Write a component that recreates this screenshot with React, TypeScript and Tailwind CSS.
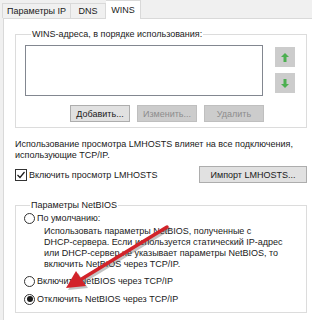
import { ReactNode } from "react"

function Btn({ children, disabled, className = "" }: { children: ReactNode; disabled?: boolean; className?: string }) {
  return (
    <div
      className={
        "h-[17px] flex items-center justify-center border " +
        (disabled ? "bg-[#cccccc] border-[#bfbfbf] text-[#8d8d8d] " : "bg-[#e1e1e1] border-[#adadad] text-[#1a1a1a] ") +
        className
      }
    >
      {children}
    </div>
  )
}

function Radio({ checked, label }: { checked?: boolean; label: string }) {
  return (
    <div className="flex items-center gap-[2px] h-[14px]">
      <div className="w-[11px] h-[11px] rounded-full border border-[#333] flex items-center justify-center bg-white">
        {checked && <div className="w-[6px] h-[6px] rounded-full bg-[#1a1a1a]" />}
      </div>
      <span>{label}</span>
    </div>
  )
}

export default function App() {
  return (
    <div className="relative w-[312px] h-[320px] overflow-hidden whitespace-nowrap bg-[#f0f0f0] text-[9px] leading-[12px] text-[#1a1a1a] font-['Liberation_Sans',Arial,sans-serif]">
      {/* tabs */}
      <div className="flex items-end h-[18px] pl-[2px]">
        <div className="w-[69px] h-[15px] border border-b-0 border-[#d9d9d9] flex items-center justify-center">Параметры IP</div>
        <div className="w-[35px] h-[15px] border border-l-0 border-b-0 border-[#d9d9d9] flex items-center justify-center">DNS</div>
        <div className="relative z-10 w-[35px] h-[19px] -mb-[1px] bg-white border border-l-0 border-b-0 border-[#d9d9d9] flex items-center justify-center">WINS</div>
      </div>

      {/* panel */}
      <div className="ml-[3px] w-[312px] h-[303px] bg-white border border-[#d9d9d9] pl-[11px] pt-[9px]">
        <fieldset className="w-[292px] h-[100px] border border-[#dcdcdc] pl-[9px]">
          <legend className="ml-[6px] px-[1px]">WINS-адреса, в порядке использования:</legend>
          <div className="flex gap-[12px] mt-[5px]">
            <div className="w-[238px] h-[51px] border border-[#828790] bg-white" />
            <div className="flex flex-col gap-[6px] pt-[2px]">
              <div className="w-[20px] h-[20px] bg-[#cccccc] flex items-center justify-center">
                <svg width="10" height="11" viewBox="0 0 10 11">
                  <path d="M5 1 L1 5 H3.5 V10 H6.5 V5 H9 Z" fill="#4caf50" />
                </svg>
              </div>
              <div className="w-[20px] h-[20px] bg-[#cccccc] flex items-center justify-center">
                <svg width="10" height="11" viewBox="0 0 10 11">
                  <path d="M5 10 L1 6 H3.5 V1 H6.5 V6 H9 Z" fill="#4caf50" />
                </svg>
              </div>
            </div>
          </div>
          <div className="flex gap-[7px] mt-[9px] ml-[45px]">
            <Btn className="w-[60px]">Добавить...</Btn>
            <Btn disabled className="w-[60px]">Изменить...</Btn>
            <Btn disabled className="w-[60px]">Удалить</Btn>
          </div>
        </fieldset>

        <div className="mt-[11px] leading-[11px]">
          Использование просмотра LMHOSTS влияет на все подключения,
          <br />
          использующие TCP/IP.
        </div>

        <div className="flex items-center justify-between w-[292px] mt-[5px]">
          <div className="flex items-center gap-[2px]">
            <div className="w-[12px] h-[12px] border border-[#333] bg-white flex items-center justify-center">
              <svg width="10" height="10" viewBox="0 0 10 10">
                <path d="M1.5 5 L4 7.5 L8.5 2" fill="none" stroke="#1a1a1a" strokeWidth="1.2" />
              </svg>
            </div>
            <span>Включить просмотр LMHOSTS</span>
          </div>
          <Btn className="w-[108px] h-[16px]">Импорт LMHOSTS...</Btn>
        </div>

        <fieldset className="w-[292px] h-[114px] border border-[#dcdcdc] mt-[16px] pl-[8px]">
          <legend className="ml-[6px] px-[1px]">Параметры NetBIOS</legend>
          <Radio label="По умолчанию:" />
          <div className="ml-[20px] mt-[1px] leading-[11px]">
            Использовать параметры NetBIOS, полученные с
            <br />
            DHCP-сервера. Если используется статический IP-адрес
            <br />
            или DHCP-сервер не указывает параметры NetBIOS, то
            <br />
            включить NetBIOS через TCP/IP.
          </div>
          <div className="mt-[4px]">
            <Radio label="Включить NetBIOS через TCP/IP" />
          </div>
          <div className="mt-[4px]">
            <Radio checked label="Отключить NetBIOS через TCP/IP" />
          </div>
        </fieldset>
      </div>

      {/* red annotation arrow */}
      <svg className="absolute left-0 top-0 pointer-events-none" width="312" height="320" viewBox="0 0 312 320">
        <g transform="translate(2 2)" opacity="0.35">
          <line x1="167" y1="227" x2="80" y2="280" stroke="#555" strokeWidth="3.5" strokeLinecap="round" />
          <path d="M66 288 L76 271 L86 286 Z" fill="#555" />
        </g>
        <line x1="167" y1="227" x2="80" y2="280" stroke="#d2232a" strokeWidth="3.5" strokeLinecap="round" />
        <path d="M66 288 L76 271 L86 286 Z" fill="#d2232a" />
      </svg>
    </div>
  )
}
